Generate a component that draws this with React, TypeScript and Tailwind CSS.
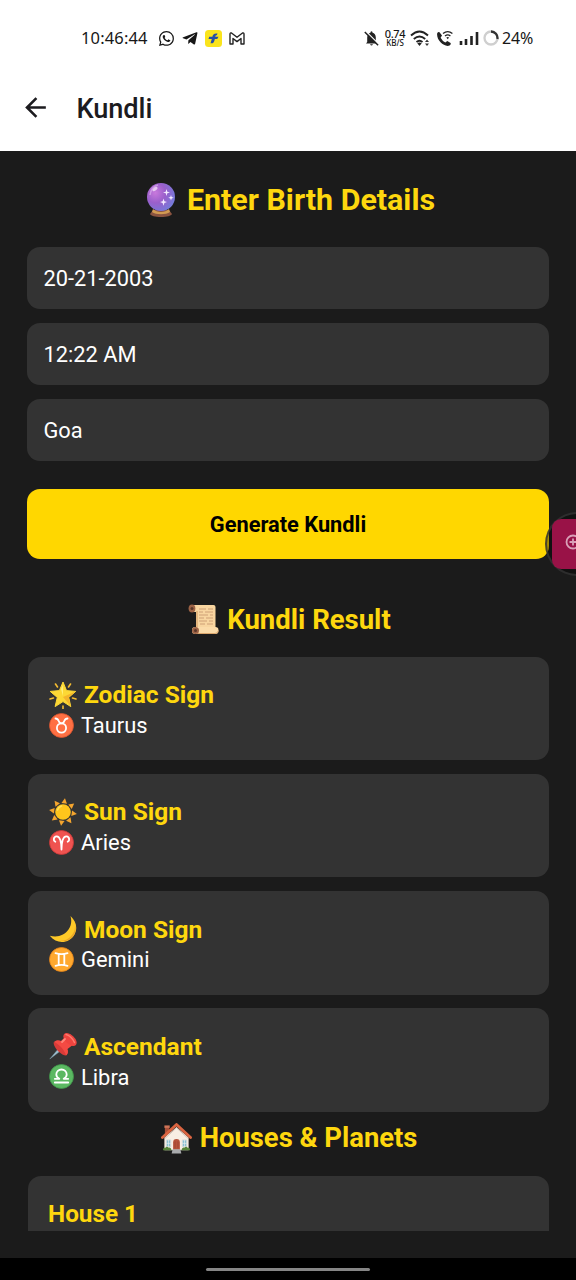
import type { ReactNode } from "react";
import { MdArrowBack } from "react-icons/md";
import { BsWhatsapp } from "react-icons/bs";
import { FaTelegramPlane } from "react-icons/fa";

function CrystalBall() {
  return (
    <svg viewBox="0 0 30 34" className="h-[34px] w-[30px] shrink-0">
      <defs>
        <radialGradient id="ball" cx="0.3" cy="0.35" r="0.8">
          <stop offset="0" stopColor="#c879dc" />
          <stop offset="0.45" stopColor="#9a5fcb" />
          <stop offset="1" stopColor="#6f7fdc" />
        </radialGradient>
      </defs>
      <path d="M7 27h16l3 4c-1 2-5 3-11 3S5 33 4 31z" fill="#8b5440" />
      <path d="M7 26c4 4 12 4 16 0l1 3c-4 3-14 3-18 0z" fill="#d29a52" />
      <circle cx="15" cy="14" r="14" fill="url(#ball)" />
      <path d="M4 12C5 6 8 3 12 2" stroke="#e0b9f0" strokeWidth="1.5" fill="none" opacity=".6" />
      <ellipse cx="9" cy="6" rx="3" ry="1.6" fill="#f2dcfa" opacity=".8" transform="rotate(-38 9 6)" />
      <path d="M20.5 6l.8 2.7 2.7.8-2.7.8-.8 2.7-.8-2.7-2.7-.8 2.7-.8zM25 12l.7 2 2 .7-2 .7-.7 2-.7-2-2-.7 2-.7zM17.5 15.500l.9 2.700 2.600.9-2.600.9-.9 2.700-.9-2.700-2.600-.9 2.600-.9z" fill="#f3eaff" />
    </svg>
  );
}

function Scroll() {
  return (
    <svg viewBox="0 0 31 31" className="h-[31px] w-[31px] shrink-0">
      <path d="M4 1h21.500q2 0 2 2v21H8V8H4z" fill="#f8d5a0" />
      <path d="M8 7v17h2V7z" fill="#e4b67e" />
      <rect x="4" y="23" width="26.500" height="7" rx="3.200" fill="#fbdba9" />
      <path d="M9 29.500h18q3 0 3.300-3" fill="none" stroke="#dba66c" strokeWidth="1" />
      <ellipse cx="4" cy="4.500" rx="3.400" ry="4" fill="#9c6245" />
      <circle cx="4" cy="4.500" r="1.500" fill="#593629" />
      <circle cx="7.500" cy="26.500" r="3.500" fill="#9c6245" />
      <circle cx="7.500" cy="26.500" r="1.500" fill="#593629" />
      <path d="M11 5h7m2 0h5M11 8h4m2 0h8M11 11h9m2 0h3M11 14h5m2 0h7M11 17h8m2 0h4M12 20h5m2 0h6" stroke="#c99a72" strokeWidth=".9" />
    </svg>
  );
}

function GlowingStar() {
  return (
    <svg viewBox="0 0 28 28" className="h-7 w-7 shrink-0">
      <path d="M14 1l3.500 8.600 9.200.8-7 6 2.100 9.200-7.800-5-7.900 5 2.200-9.200-7.100-6 9.200-.8z" fill="#fdd835" strokeLinejoin="round" stroke="#fdd835" />
      <path d="M14 16l12.500-5.400-6.800 5.800 2 8.800z" fill="#f4b52b" />
      <path d="M14 15L12 8l2-4z" fill="#fff07a" />
      <path d="M6.500 3l2 3M21.500 3l-2 3M1 18l3.500-1M27 18l-3.500-1M14 25v3" stroke="#f6bd31" strokeWidth="1.600" strokeLinecap="round" />
    </svg>
  );
}

function Sun() {
  return (
    <svg viewBox="0 0 28 28" className="h-7 w-7 shrink-0">
      <g fill="#f5a52e">
        {[8, 53, 98, 143, 188, 233, 278, 323].map((a) => (
          <path key={a} d="M11.200 5.200L14 0l2.800 5.200z" transform={`rotate(${a} 14 14)`} />
        ))}
      </g>
      <circle cx="14" cy="14" r="7.800" fill="#ffc51c" />
      <path d="M8.500 12q1-3 4-4" stroke="#ffe15c" strokeWidth="1.600" fill="none" strokeLinecap="round" />
    </svg>
  );
}

function Moon() {
  return (
    <svg viewBox="0 0 28 28" className="h-7 w-7 shrink-0">
      <path d="M21.500 1C27 6 29 13 25.500 19.500 20.500 28.500 8 30 .8 20.800c8 2.200 15.200-.8 18.900-6.500C22.500 10 22.800 5.500 21.500 1z" fill="#ffca28" />
      <path d="M26 10c.7 9-7 16.500-16 15.600C21 28.500 29 19 26 10z" fill="#eda727" />
    </svg>
  );
}

function Pushpin() {
  return (
    <svg viewBox="0 0 28 28" className="h-7 w-7 shrink-0">
      <path d="M10 16L.8 27 12 18.500z" fill="#9fc0cf" stroke="#7795a2" strokeWidth=".5" />
      <path d="M4.500 10.500c4-2 8 0 11 3.500s4.500 7 1.500 9.500C13 23.500 5 17 4.500 10.500z" fill="#d93b38" />
      <path d="M5 10c2-2 5-2 7-1l5-5 8 8-6.500 5c1 2.500.5 5-1.500 6.500-1-5-6.500-11-12-13.500z" fill="#f44a43" />
      <ellipse cx="21" cy="7.500" rx="8" ry="4.600" transform="rotate(43 21 7.500)" fill="#ee443f" />
      <path d="M17 2.500c3 .5 7 4 8.500 8" stroke="#ff7b6d" strokeWidth="1.500" fill="none" strokeLinecap="round" />
      <path d="M13 10l3-3" stroke="#ff887b" strokeWidth="1.800" strokeLinecap="round" />
    </svg>
  );
}

function House() {
  return (
    <svg viewBox="0 0 32 32" className="h-[31px] w-[31px] shrink-0">
      <path d="M4 4h4.500v9H4z" fill="#a95039" />
      <path d="M3.500 2.500H9V5H3.500z" fill="#cf7558" />
      <path d="M3.500 15L16 4l12.500 11v13h-25z" fill="#f8eee3" />
      <path d="M1.500 15L16 1.500 30.500 15" fill="none" stroke="#da6440" strokeWidth="2.900" strokeLinejoin="round" strokeLinecap="round" />
      <path d="M4 16L16 5l12 11" fill="none" stroke="#c7b2a4" strokeWidth=".8" />
      <path d="M12.500 27.500V20q0-3.500 3.500-3.500t3.500 3.500v7.500z" fill="#b6533b" />
      <path d="M14.500 26v-7M17.500 26v-7" stroke="#933e2e" strokeWidth=".6" />
      <path d="M5.500 17.500H10v7H5.500zM22 17.500h4.500v7H22z" fill="#88bfd2" stroke="#d5dcdb" />
      <path d="M7.750 17.500v7M5.500 21H10M24.250 17.500v7M22 21h4.500" stroke="#e8efed" strokeWidth=".7" />
      <path d="M2 28q0-3 2.500-2.500Q6 23.500 8 25.500q2-1 3 2.500zM21 28q1-3.500 3-2.500 2-2 3.500 0 2.500-.5 2.500 2.500z" fill="#57853a" />
      <path d="M12 27h8l1 4.500H11z" fill="#a9abad" />
    </svg>
  );
}

function Zodiac({ color, edge, children }: { color: string; edge: string; children: ReactNode }) {
  return (
    <svg viewBox="0 0 25 25" className="h-[25px] w-[25px] shrink-0">
      <circle cx="12.500" cy="12.500" r="12" fill={color} stroke={edge} strokeWidth=".8" />
      <g fill="none" stroke="#fff" strokeWidth="1.800" strokeLinecap="round" strokeLinejoin="round">
        {children}
      </g>
    </svg>
  );
}

const results = [
  {
    title: "Zodiac Sign",
    value: "Taurus",
    icon: <GlowingStar />,
    sign: (
      <Zodiac color="#ff7043" edge="#dc542e">
        <circle cx="12.500" cy="15" r="4.600" />
        <path d="M6.500 5.500c2 0 2.600 1 3.200 2.500.5 1.600 1.300 2.400 2.800 2.400s2.300-.8 2.800-2.400c.6-1.500 1.200-2.500 3.200-2.500" />
      </Zodiac>
    ),
  },
  {
    title: "Sun Sign",
    value: "Aries",
    icon: <Sun />,
    sign: (
      <Zodiac color="#ef5350" edge="#cc3838">
        <path d="M6.300 11.700C4 10.800 4.500 6.500 7.500 6.300c3.500-.2 5 5.500 5 13.200 0-7.700 1.500-13.400 5-13.200 3 .2 3.500 4.500 1.200 5.400" />
      </Zodiac>
    ),
  },
  {
    title: "Moon Sign",
    value: "Gemini",
    icon: <Moon />,
    sign: (
      <Zodiac color="#ffa92f" edge="#e98517">
        <path d="M6.500 6.200q6 2 12 0M6.500 18.800q6-2 12 0M9.700 7v11M15.300 7v11" />
      </Zodiac>
    ),
  },
  {
    title: "Ascendant",
    value: "Libra",
    icon: <Pushpin />,
    sign: (
      <Zodiac color="#5bb862" edge="#40984a">
        <path d="M5.800 18.500h13.400M5.800 14.800h4.500c-2-1.200-3-2.500-3-4.300a5.200 5 0 0 1 10.400 0c0 1.800-1 3.100-3 4.300h4.500" />
      </Zodiac>
    ),
  },
];

function SectionTitle({ icon, children, className }: { icon: ReactNode; children: ReactNode; className: string }) {
  return (
    <h2 className={`flex items-center justify-center whitespace-nowrap font-bold leading-none text-[#fed70e] ${className}`}>
      {icon}
      <span>{children}</span>
    </h2>
  );
}

function StatusBar() {
  return (
    <div className="flex h-[76px] shrink-0 items-center justify-between bg-white pr-[41px] pl-[81px] text-[#171717]">
      <div className="flex items-center">
        <span className="w-[68px] whitespace-nowrap pt-px font-['Noto_Sans',sans-serif] text-[16.500px] leading-none tracking-[0.15px]">10:46:44</span>
        <BsWhatsapp className="ml-[10px] h-[15px] w-[15px]" />
        <FaTelegramPlane className="ml-2 h-[17px] w-4" />
        <svg viewBox="0 0 17 17" className="ml-[7px] h-[17px] w-[17px]">
          <rect width="17" height="17" rx="3.500" fill="#fae41c" />
          <path d="M12.500 3.500c-3.300-.5-4.800.8-5.100 3.200H4.200l-.7 2.200h3.300L5.500 13.300c3 .4 3.800-1.400 4.300-4.400h2.400l1.300-2.200h-3.200c.2-1.200.7-1.600 1.600-1.500z" fill="#244ea6" />
        </svg>
        <svg viewBox="0 0 16 13" className="ml-[7px] h-[13px] w-4">
          <path d="M1 12V2q0-1.500 1.500-1L8 5.200 13.500 1Q15 .5 15 2v10h-3V6.500L8 9.600 4 6.500V12z" fill="none" stroke="#222" strokeWidth="1.400" strokeLinejoin="round" />
        </svg>
      </div>
      <div className="flex items-center">
        <svg viewBox="0 0 17 17" className="h-[17px] w-[17px]">
          <path d="M3 13.500L4.200 12V7.200Q4.500 3.500 7.500 2.700V2Q8.500.5 9.500 2v.7q3 .8 3.300 4.500V12l1.200 1.500zM7 14.300h3q-1.500 2.500-3 0z" fill="#222" />
          <path d="M2.800 1.200l13 13" stroke="#fff" strokeWidth="1.300" />
          <path d="M1.800 2l13.300 13.300" stroke="#222" strokeWidth="1.500" />
        </svg>
        <div className="ml-1 flex w-[22px] flex-col items-center whitespace-nowrap font-['Noto_Sans',sans-serif] font-medium">
          <span className="h-[10px] text-[11px] leading-[10px] tracking-[-0.4px]">0.74</span>
          <span className="h-2 text-[8px] leading-[8px] tracking-[-0.1px]">KB/S</span>
        </div>
        <svg viewBox="0 0 21 17" className="ml-[4px] h-[17px] w-[21px]">
          <path d="M1 5.500q8.500-8 17 0M3.800 9q5.700-5 11.400 0M6.500 12q3-2.500 6 0" fill="none" stroke="#222" strokeWidth="1.900" />
          <path d="M7.300 13.300q2.200-1.500 4.400 0L9.500 16z" fill="#222" />
          <path d="M15 12l2-2.500 2 2.500zM15 13.500h4L17 16z" fill="#333" />
        </svg>
        <svg viewBox="0 0 17 17" className="ml-[5px] h-[17px] w-[17px]">
          <path d="M1.200 3.200Q2 1.800 3.500 2.200L6 5.600 4.600 7.800q1.700 3.200 4.700 4.700l2-1.600 3.300 2.100q.6 1.400-1.100 2.600C8 17.500 0 10 1.200 3.200z" fill="#222" />
          <path d="M7 3.600q4.700-4 9.400 0M9 6q2.700-2.200 5.400 0" fill="none" stroke="#222" strokeWidth="1.300" />
          <path d="M10.300 7.400q1.400-1 2.800 0l-1.400 1.800z" fill="#222" />
        </svg>
        <svg viewBox="0 0 20 14" className="ml-[6px] h-[14px] w-5">
          <path d="M2 14v-4M7 14V8M12.500 14V5M18 14V1" stroke="#222" strokeWidth="2.600" />
        </svg>
        <svg viewBox="0 0 16 16" className="ml-[4px] h-4 w-4">
          <circle cx="8" cy="8" r="6.500" fill="none" stroke="#cfcfcf" strokeWidth="2.300" />
          <path d="M8 1.500a6.500 6.500 0 0 1 6.400 7.500" fill="none" stroke="#333" strokeWidth="2.300" />
        </svg>
        <span className="ml-[3px] w-[33px] whitespace-nowrap font-['Noto_Sans',sans-serif] text-[16px] leading-none tracking-[-0.2px]">24%</span>
      </div>
    </div>
  );
}

export default function App() {
  return (
    <div className="relative flex h-[1280px] w-[576px] flex-col overflow-hidden bg-[#1b1b1b] font-[Roboto,sans-serif]">
      <StatusBar />
      <header className="flex h-[75px] shrink-0 items-center bg-white pb-[11px] pl-[20px] text-[#1c1b1f]">
        <MdArrowBack className="mb-px h-[31px] w-[31px]" />
        <h1 className="ml-[25.500px] pt-[4px] text-[27.200px] font-medium leading-none tracking-[-0.1px]">Kundli</h1>
      </header>

      <main className="flex h-[1080px] shrink-0 flex-col overflow-hidden px-[27px]">
        <SectionTitle icon={<CrystalBall />} className="mt-8 h-[34px] shrink-0 gap-[11px] pl-[5px] text-[30.400px]">
          Enter Birth Details
        </SectionTitle>
        <div className="mt-[29.500px] flex flex-col gap-[13.500px]">
          {["20-21-2003", "12:22 AM", "Goa"].map((value) => (
            <div key={value} className="flex h-[62.500px] items-center rounded-[13px] bg-[#333333] px-[16.500px] pt-[3px] text-[21.800px] leading-none text-white">
              {value}
            </div>
          ))}
        </div>
        <button className="mt-[27.500px] h-[70px] shrink-0 rounded-[13px] bg-[#ffd700] pt-[2px] text-[21.800px] font-bold leading-none text-black">
          Generate Kundli
        </button>

        <SectionTitle icon={<Scroll />} className="mt-[45px] h-[31px] shrink-0 gap-[8px] pt-px pl-[3px] text-[27.500px]">
          Kundli Result
        </SectionTitle>
        <div className="mt-[22px] flex flex-col gap-[13.500px] pl-px">
          {results.map(({ title, value, icon, sign }) => (
            <section key={title} className="h-[103.700px] rounded-[13px] bg-[#333333] pt-6 pl-[21px] leading-none">
              <h3 className="flex h-7 items-center gap-[7px] text-[24.500px] font-bold text-[#fed70e]">
                {icon}
                <span className="pt-[2px]">{title}</span>
              </h3>
              <div className="mt-1 flex h-[25px] items-center gap-[7px] text-[21.900px] text-white">
                {sign}
                <span className="pt-[2px]">{value}</span>
              </div>
            </section>
          ))}
        </div>

        <SectionTitle icon={<House />} className="mt-[11px] h-[31px] shrink-0 gap-2 pt-px pl-[2px] text-[27.400px]">
          Houses &amp; Planets
        </SectionTitle>
        <section className="mt-[22px] ml-px h-[100px] shrink-0 rounded-t-[13px] bg-[#333333] pt-[26px] pl-5">
          <h3 className="text-[24.300px] font-bold leading-none text-[#fed70e]">House 1</h3>
        </section>
      </main>

      <div className="h-[27px] shrink-0" />
      <div className="flex h-[22px] shrink-0 items-center justify-center bg-black">
        <div className="h-[3px] w-[164px] rounded-full bg-[#858585]" />
      </div>

      <div className="absolute top-[512px] left-[545px] h-16 w-16 rounded-full border-2 border-[#343434]/80 bg-black/35">
        <div className="absolute top-[5px] left-[5px] flex h-[50px] w-12 items-center rounded-[9px] bg-[#991247] pl-[13px]">
          <svg viewBox="0 0 16 16" className="mb-[4px] h-4 w-4">
            <circle cx="8" cy="8" r="6.500" fill="none" stroke="#d9a1b8" strokeWidth="1.800" />
            <path d="M8 4.500v7M4.500 8h7" stroke="#d9a1b8" strokeWidth="1.800" />
          </svg>
        </div>
      </div>
    </div>
  );
}
